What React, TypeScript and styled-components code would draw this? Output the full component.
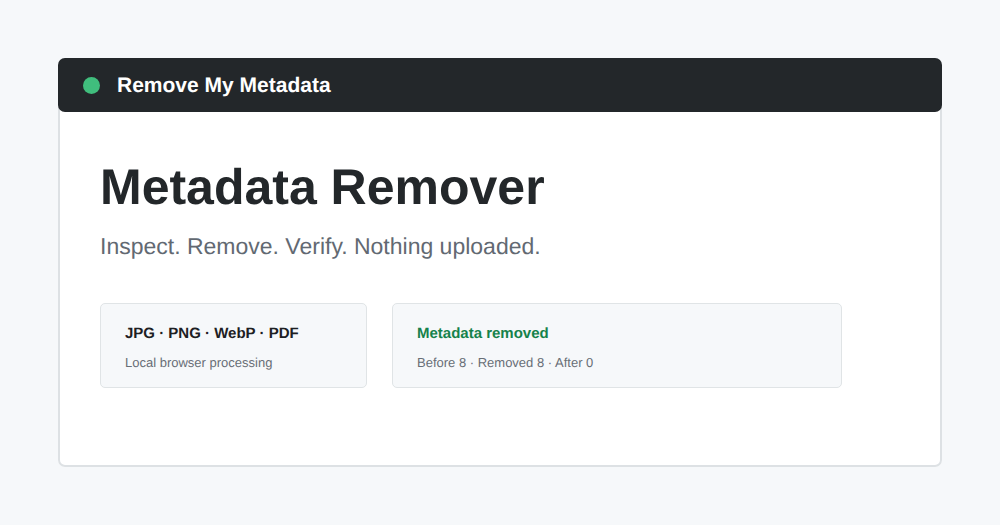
import React from 'react';
import styled, { createGlobalStyle } from 'styled-components';

type InfoCardPropsType = {
    title: string,
    text: string,
    accent?: boolean
}

const InfoCard = (props: InfoCardPropsType) => {
    return (
        <StyledCard>
            <CardTitle $accent={props.accent}>{props.title}</CardTitle>
            <CardText>{props.text}</CardText>
        </StyledCard>
    );
};

const App = () => {
    return (
        <Page>
            <GlobalStyle />
            <Window>
                <Header>
                    <Dot />
                    <Brand>Remove My Metadata</Brand>
                </Header>
                <Content>
                    <Title>Metadata Remover</Title>
                    <Subtitle>Inspect. Remove. Verify. Nothing uploaded.</Subtitle>
                    <Cards>
                        <InfoCard title={'JPG · PNG · WebP · PDF'} text={'Local browser processing'} />
                        <InfoCard title={'Metadata removed'} text={'Before 8 · Removed 8 · After 0'} accent />
                    </Cards>
                </Content>
            </Window>
        </Page>
    );
};

export default App;

const GlobalStyle = createGlobalStyle`
  * {
    box-sizing: border-box;
  }

  body {
    margin: 0;
    background-color: #f6f8fa;
    font-family: "Liberation Sans", Arial, sans-serif;
    text-rendering: geometricPrecision;
  }
`

const Page = styled.main`
  display: flex;
  min-height: 100vh;
  padding: 58px;
`

const Window = styled.section`
  display: flex;
  flex-direction: column;
  flex: 1;
  background-color: #fff;
  border-radius: 7px;
  box-shadow: inset 0 0 0 2px #dde1e4;
`

const Header = styled.header`
  display: flex;
  align-items: center;
  gap: 17px;
  height: 54px;
  padding: 0 25px;
  background-color: #23272a;
  border-radius: 7px;
`

const Dot = styled.span`
  width: 17px;
  height: 17px;
  border-radius: 50%;
  background-color: #40be7d;
`

const Brand = styled.span`
  padding-top: 2px;
  color: #fff;
  font-size: 21px;
  font-weight: 700;
  line-height: 24px;
`

const Content = styled.div`
  padding: 45px 100px 45px 42px;
`

const Title = styled.h1`
  margin: 0;
  color: #23272a;
  font-size: 50px;
  font-weight: 700;
  line-height: 60px;
`

const Subtitle = styled.p`
  margin: 15px 0 0;
  color: #626972;
  font-size: 23px;
  line-height: 28px;
`

const Cards = styled.div`
  display: grid;
  grid-template-columns: 267fr 450fr;
  gap: 25px;
  margin-top: 43px;
`

const StyledCard = styled.article`
  padding: 20px 24px 16px;
  background-color: #f6f8fa;
  border: 1px solid #e0e4e6;
  border-radius: 5px;
`

const CardTitle = styled.h2<{ $accent?: boolean }>`
  margin: 0;
  color: ${props => props.$accent ? '#15824b' : '#1d2023'};
  font-size: 15px;
  font-weight: 700;
  line-height: 20px;
`

const CardText = styled.p`
  margin: 10px 0 0;
  color: #686e76;
  font-size: 13px;
  line-height: 17px;
`
